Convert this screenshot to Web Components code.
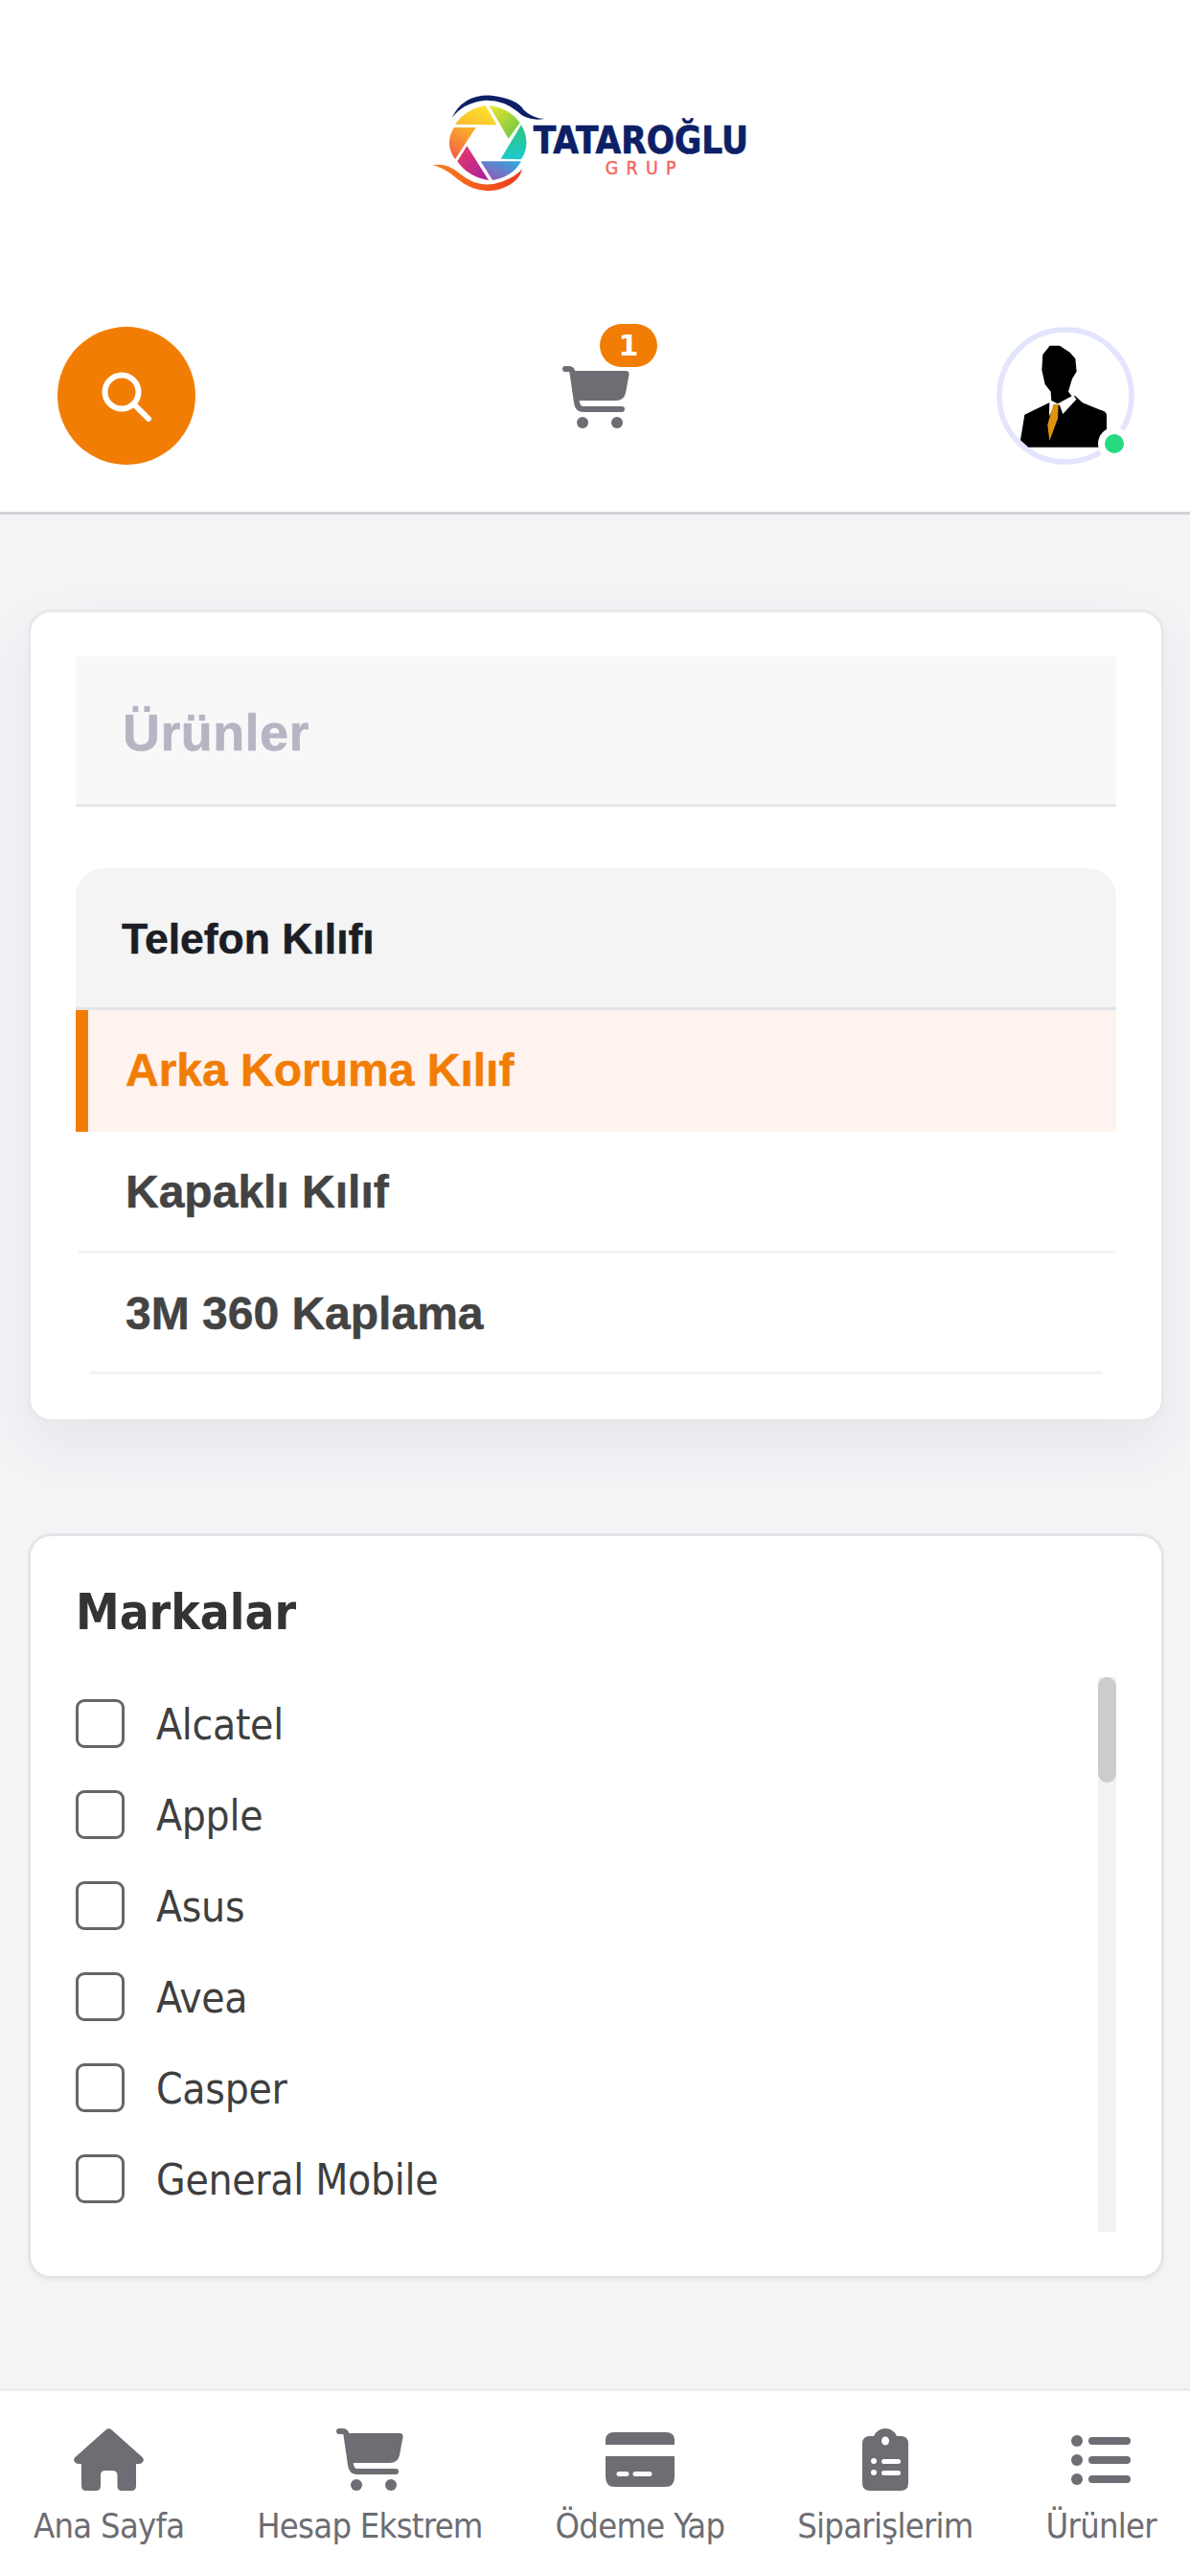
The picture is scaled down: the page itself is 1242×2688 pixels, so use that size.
<!DOCTYPE html>
<html lang="tr">
<head>
<meta charset="utf-8">
<title>Ürünler</title>
<style>
  html, body { margin: 0; padding: 0; }
  body {
    width: 1242px;
    height: 2688px;
    display: flex;
    flex-direction: column;
    background: #f4f4f7;
    font-family: "Liberation Sans", Arial, sans-serif;
  }
  main { flex: 1; padding: 99px 27px 0 29px; display: flex; flex-direction: column; gap: 116px; }
</style>
</head>
<body>
<top-bar></top-bar>
<main>
  <menu-card>
    <menu-group slot="items" label="Telefon Kılıfı">
      <menu-item active>Arka Koruma Kılıf</menu-item>
      <menu-item line="near">Kapaklı Kılıf</menu-item>
      <menu-item line="inset">3M 360 Kaplama</menu-item>
    </menu-group>
  </menu-card>
  <brand-card>
    <brand-row>Alcatel</brand-row>
    <brand-row>Apple</brand-row>
    <brand-row>Asus</brand-row>
    <brand-row>Avea</brand-row>
    <brand-row>Casper</brand-row>
    <brand-row>General Mobile</brand-row>
  </brand-card>
</main>
<bottom-nav>
  <nav-item icon="home">Ana Sayfa</nav-item>
  <nav-item icon="cart">Hesap Ekstrem</nav-item>
  <nav-item icon="card">Ödeme Yap</nav-item>
  <nav-item icon="orders">Siparişlerim</nav-item>
  <nav-item icon="list">Ürünler</nav-item>
</bottom-nav>

<script>
// Icons, drawn at the size they have in the bottom bar
const ICONS = {
  home: `<svg width="73" height="65" viewBox="0 0 73 65" fill="#6d6d73"><path d="M36.5 0Q38 0 39.5 1.5L71.5 30Q74 33 72 35Q71 37 68 37H65V60Q65 65 60 65H50Q45.5 65 45.5 60V49Q45.5 44 40 44H33Q28 44 28 49V60Q28 65 23 65H13Q8 65 8 60V37H5Q2 37 1 35Q-1 33 1.5 30L33.5 1.5Q35 0 36.5 0Z"/></svg>`,
  cart: `<svg width="70" height="65" viewBox="0 0 70 65" fill="#6d6d73"><path d="M3 3H7Q10 3 10.5 7L15 38Q16 45 22 45H62" fill="none" stroke="#6d6d73" stroke-width="6" stroke-linecap="round"/><path d="M11 5H66Q70 5 69.5 9L66 28Q64 36 56 36H15Z"/><circle cx="21" cy="59" r="6"/><circle cx="57" cy="59" r="6"/></svg>`,
  card: `<svg width="72" height="58" viewBox="0 0 72 58" fill="#6d6d73"><path d="M0 13V9Q0 0 9 0H63Q72 0 72 9V13Z"/><path fill-rule="evenodd" d="M0 25H72V47Q72 57 62 57H10Q0 57 0 47ZM14 41Q11.500 41 11.500 43.500T14 46H22Q24.500 46 24.500 43.500T22 41ZM31 41Q28.500 41 28.500 43.500T31 46H46Q48.500 46 48.500 43.500T46 41Z"/></svg>`,
  orders: `<svg width="48" height="65" viewBox="0 0 48 65" fill="#6d6d73"><path fill-rule="evenodd" d="M12 8Q16 0 24 0T36 8H40Q48 8 48 16V57Q48 65 40 65H8Q0 65 0 57V16Q0 8 8 8ZM24 8.500A4 4.500 0 1 0 24 17.500A4 4.500 0 1 0 24 8.500Z"/><g fill="#fff"><circle cx="12" cy="34" r="3"/><circle cx="12" cy="46" r="3"/><rect x="20" y="32" width="20" height="5" rx="2.500"/><rect x="20" y="44" width="20" height="5" rx="2.500"/></g></svg>`,
  list: `<svg width="62" height="52" viewBox="0 0 62 52" fill="#6d6d73"><circle cx="6" cy="6" r="6"/><circle cx="6" cy="26" r="6"/><circle cx="6" cy="46" r="6"/><rect x="18" y="2" width="44" height="8" rx="4"/><rect x="18" y="22" width="44" height="8" rx="4"/><rect x="18" y="42" width="44" height="8" rx="4"/></svg>`
};

// Logo mark is traced in the coordinates of the zoomed crop (3x), hence the viewBox
class BrandLogo extends HTMLElement {
  constructor() {
    super();
    this.attachShadow({ mode: "open" });
    this.shadowRoot.innerHTML = `
      <style>
        :host { display: block; width: 340px; height: 110px; }
        svg { display: block; }
        text { font-family: "DejaVu Sans Condensed", "DejaVu Sans", sans-serif; }
      </style>
      <svg width="340" height="110" viewBox="150 70 1020 330">
        <defs>
          <linearGradient id="b1" x1="0" x2="1" y1="1" y2="0"><stop offset="0" stop-color="#fbb72f"/><stop offset="1" stop-color="#fdea2a"/></linearGradient>
          <linearGradient id="b2" x1="0" x2="1" y1="0" y2="1"><stop offset="0" stop-color="#f0e52c"/><stop offset="1" stop-color="#5fc64a"/></linearGradient>
          <linearGradient id="b3" x1="0" x2="0" y1="0" y2="1"><stop offset="0" stop-color="#2cc77c"/><stop offset="1" stop-color="#1fc9cf"/></linearGradient>
          <linearGradient id="b4" x1="1" x2="0" y1="0" y2="1"><stop offset="0" stop-color="#28aede"/><stop offset="1" stop-color="#a64cb6"/></linearGradient>
          <linearGradient id="b5" x1="0" x2="1" y1="0" y2="1"><stop offset="0" stop-color="#ec3a63"/><stop offset="1" stop-color="#a61fa3"/></linearGradient>
          <linearGradient id="b6" x1="0.500" x2="0" y1="0" y2="1"><stop offset="0" stop-color="#fbaa2c"/><stop offset="1" stop-color="#f0564a"/></linearGradient>
          <linearGradient id="sw" x1="0" x2="1" y1="0" y2="0"><stop offset="0" stop-color="#f7821e"/><stop offset="1" stop-color="#ee3a1f"/></linearGradient>
        </defs>
        <path fill="url(#b1)" d="M225 180Q262 130 320 122L355 182Z"/>
        <path fill="url(#b2)" d="M332 122Q395 130 428 175L392 225Z"/>
        <path fill="url(#b3)" d="M432 182Q465 240 432 290L368 288Z"/>
        <path fill="url(#b4)" d="M305 296H432Q405 345 342 355Z"/>
        <path fill="url(#b5)" d="M262 248L330 355Q265 345 232 296Z"/>
        <path fill="url(#b6)" d="M222 190H290L225 290Q190 240 222 190Z"/>
        <path fill="#0d1f66" d="M215 160Q250 85 340 90Q420 100 440 135Q465 160 505 163Q450 172 420 140Q380 105 320 105Q250 112 215 160Z"/>
        <path fill="url(#sw)" d="M155 308Q200 300 240 335Q300 385 370 360Q415 345 435 320Q425 365 360 385Q290 400 230 350Q195 318 155 308Z"/>
        <text x="470" y="270" font-size="115" font-weight="700" fill="#0d1f66" stroke="#0d1f66" stroke-width="2">TATAROĞLU</text>
        <text x="695" y="338" font-size="58" fill="#f4695f" stroke="#f4695f" stroke-width="1.500" letter-spacing="25">GRUP</text>
      </svg>
    `;
  }
}

class ManAvatar extends HTMLElement {
  constructor() {
    super();
    this.attachShadow({ mode: "open" });
    this.shadowRoot.innerHTML = `
      <style>
        :host { display: block; position: relative; width: 144px; height: 144px; }
        svg { display: block; }
        .dot {
          position: absolute; left: 106px; top: 105px;
          width: 20px; height: 20px; border-radius: 50%;
          background: #27d97f; border: 7px solid #fff;
        }
      </style>
      <svg width="144" height="144" viewBox="180 65 432 432">
        <circle cx="396" cy="281" r="207" fill="#fff" stroke="#e3e4fd" stroke-width="17"/>
        <path fill="#000" d="M345 303L268 340Q262 380 255 420L280 442H525V340Q522 328 505 325L450 303L425 280L380 310Z"/>
        <path fill="#fff" d="M346 300L365 306L345 345ZM376 306L420 278L430 292L388 338Z"/>
        <path fill="#e0930f" d="M358 308H374L372 352L346 422L340 372Z"/>
        <path fill="#000" d="M347 124L378 124L410 145L427 165L431 205L417 228L405 268L416 282L372 306L352 296L350 268L332 245L322 200L325 152Z"/>
      </svg>
      <div class="dot"></div>
    `;
  }
}

class TopBar extends HTMLElement {
  constructor() {
    super();
    this.attachShadow({ mode: "open" });
    this.shadowRoot.innerHTML = `
      <style>
        :host { display: block; background: #fff; border-bottom: 3px solid #d2d2da; height: 534px; box-sizing: content-box; }
        .logo { display: flex; justify-content: center; padding: 93px 2px 0 0; }
        .tools {
          display: flex; justify-content: space-between; align-items: center;
          margin-top: 138px; padding: 0 58px 0 60px;
        }
        .search {
          width: 144px; height: 144px; border-radius: 50%; background: #f27d05;
          display: flex; align-items: center; justify-content: center;
        }
        .search svg { margin: 1px 0 0 -1px; }
        .cart { position: relative; width: 72px; height: 65px; margin-top: 3px; }
        .cart svg { display: block; width: 72px; height: 65px; }
        .badge {
          position: absolute; left: 40px; top: -44px;
          width: 60px; height: 45px; border-radius: 23px;
          background: #f27d05; color: #fff;
          font: 700 30px/45px "DejaVu Sans", sans-serif; text-align: center;
        }
      </style>
      <div class="logo"><brand-logo></brand-logo></div>
      <div class="tools">
        <div class="search">
          <svg width="54" height="54" viewBox="0 0 54 54" fill="none" stroke="#fff"><circle cx="22" cy="22" r="17.500" stroke-width="6"/><path d="M35 35L50 50" stroke-width="6" stroke-linecap="round"/></svg>
        </div>
        <div class="cart">${ICONS.cart}<span class="badge">1</span></div>
        <man-avatar></man-avatar>
      </div>
    `;
  }
}

class MenuCard extends HTMLElement {
  constructor() {
    super();
    this.attachShadow({ mode: "open" });
    this.shadowRoot.innerHTML = `
      <style>
        :host {
          display: block; box-sizing: border-box; height: 848px;
          background: #fff; border: 3px solid #e8e8eb; border-radius: 24px;
          padding: 46px 47px 0;
          box-shadow: 0 24px 60px rgba(60, 60, 80, .07);
        }
        h2 {
          margin: 0 0 64px; height: 154px; box-sizing: content-box;
          background: #f8f8f9; border-bottom: 3px solid #e6e6ea;
          padding-left: 49px;
          font: 700 54px/158px "Liberation Sans", Arial, sans-serif; color: #b5b5c3;
          letter-spacing: .4px; -webkit-text-stroke: .6px #b5b5c3;
        }
      </style>
      <h2>Ürünler</h2>
      <slot name="items"></slot>
    `;
  }
}

class MenuGroup extends HTMLElement {
  constructor() {
    super();
    this.attachShadow({ mode: "open" });
    this.shadowRoot.innerHTML = `
      <style>
        :host { display: block; }
        .head {
          height: 145px; background: #f4f4f5; border-bottom: 3px solid #e4e4e8;
          border-radius: 30px 30px 0 0; padding-left: 48px;
          font: 700 44.500px/147px "Liberation Sans", Arial, sans-serif; color: #1b1e24;
          -webkit-text-stroke: .5px #1b1e24;
        }
      </style>
      <div class="head"></div>
      <slot></slot>
    `;
    this.shadowRoot.querySelector(".head").textContent = this.getAttribute("label");
  }
}

class MenuItem extends HTMLElement {
  constructor() {
    super();
    this.attachShadow({ mode: "open" });
    this.shadowRoot.innerHTML = `
      <style>
        :host {
          display: block; position: relative; box-sizing: border-box; height: 126px;
          padding-left: 52px;
          font: 700 48px/126px "Liberation Sans", Arial, sans-serif; color: #434343;
          -webkit-text-stroke: .5px currentColor;
        }
        :host([line="near"]) { height: 127px; }
        :host([active]) {
          height: 127px; background: #fef3ee; color: #f27d05;
          border-left: 13px solid #f27d05; padding-left: 39px;
        }
        .line { position: absolute; bottom: 0; height: 3px; background: #f2f3f6; right: 0; }
        :host([line="near"]) .line { left: 3px; }
        :host([line="inset"]) .line { left: 14px; right: 15px; border-radius: 2px; }
        :host([active]) .line { display: none; }
      </style>
      <slot></slot>
      <div class="line"></div>
    `;
  }
}

class BrandRow extends HTMLElement {
  constructor() {
    super();
    this.attachShadow({ mode: "open" });
    this.shadowRoot.innerHTML = `
      <style>
        :host {
          display: flex; align-items: center; gap: 33px; height: 95px; flex: none;
          font: 400 44px/95px "DejaVu Sans Condensed", "DejaVu Sans", sans-serif; color: #3f3f3f;
          letter-spacing: -.3px;
        }
        .box {
          width: 51px; height: 51px; box-sizing: border-box; flex: none;
          border: 3px solid #666; border-radius: 9px; background: #fff;
        }
        .label { padding-top: 2px; }
      </style>
      <span class="box"></span>
      <span class="label"><slot></slot></span>
    `;
  }
}

class BrandCard extends HTMLElement {
  constructor() {
    super();
    this.attachShadow({ mode: "open" });
    this.shadowRoot.innerHTML = `
      <style>
        :host {
          display: block; box-sizing: border-box; height: 778px;
          background: #fff; border: 3px solid #e5e5e8; border-radius: 24px;
          padding: 50px 47px 0;
          box-shadow: 0 3px 3px rgba(0, 0, 0, .03);
        }
        h3 {
          margin: 0 0 25px; height: 72px;
          font: 700 51px/60px "DejaVu Sans Condensed", "DejaVu Sans", sans-serif; color: #333;
        }
        .wrap { display: flex; justify-content: space-between; height: 579px; overflow: hidden; }
        .rows { display: flex; flex-direction: column; padding-top: 1px; }
        .track { width: 19px; background: #f2f2f2; }
        .thumb { height: 110px; background: #ccc; border-radius: 10px; }
      </style>
      <h3>Markalar</h3>
      <div class="wrap">
        <div class="rows"><slot></slot></div>
        <div class="track"><div class="thumb"></div></div>
      </div>
    `;
  }
}

class BottomNav extends HTMLElement {
  constructor() {
    super();
    this.attachShadow({ mode: "open" });
    this.shadowRoot.innerHTML = `
      <style>
        :host {
          display: flex; justify-content: space-between; box-sizing: border-box;
          height: 196px; background: #fff; border-top: 3px solid #ececee;
          padding: 39px 35px 0;
        }
      </style>
      <slot></slot>
    `;
  }
}

class NavItem extends HTMLElement {
  constructor() {
    super();
    this.attachShadow({ mode: "open" });
    this.shadowRoot.innerHTML = `
      <style>
        :host {
          display: flex; flex-direction: column; align-items: center;
          font: 400 36px/44px "DejaVu Sans Condensed", "DejaVu Sans", sans-serif; color: #6d6d73;
          letter-spacing: -.7px;
        }
        .icon { height: 65px; display: flex; align-items: center; justify-content: center; margin-bottom: 15px; }
        svg { display: block; }
      </style>
      <div class="icon">${ICONS[this.getAttribute("icon")]}</div>
      <span><slot></slot></span>
    `;
  }
}

customElements.define("brand-logo", BrandLogo);
customElements.define("man-avatar", ManAvatar);
customElements.define("top-bar", TopBar);
customElements.define("menu-card", MenuCard);
customElements.define("menu-group", MenuGroup);
customElements.define("menu-item", MenuItem);
customElements.define("brand-row", BrandRow);
customElements.define("brand-card", BrandCard);
customElements.define("bottom-nav", BottomNav);
customElements.define("nav-item", NavItem);
</script>
</body>
</html>
